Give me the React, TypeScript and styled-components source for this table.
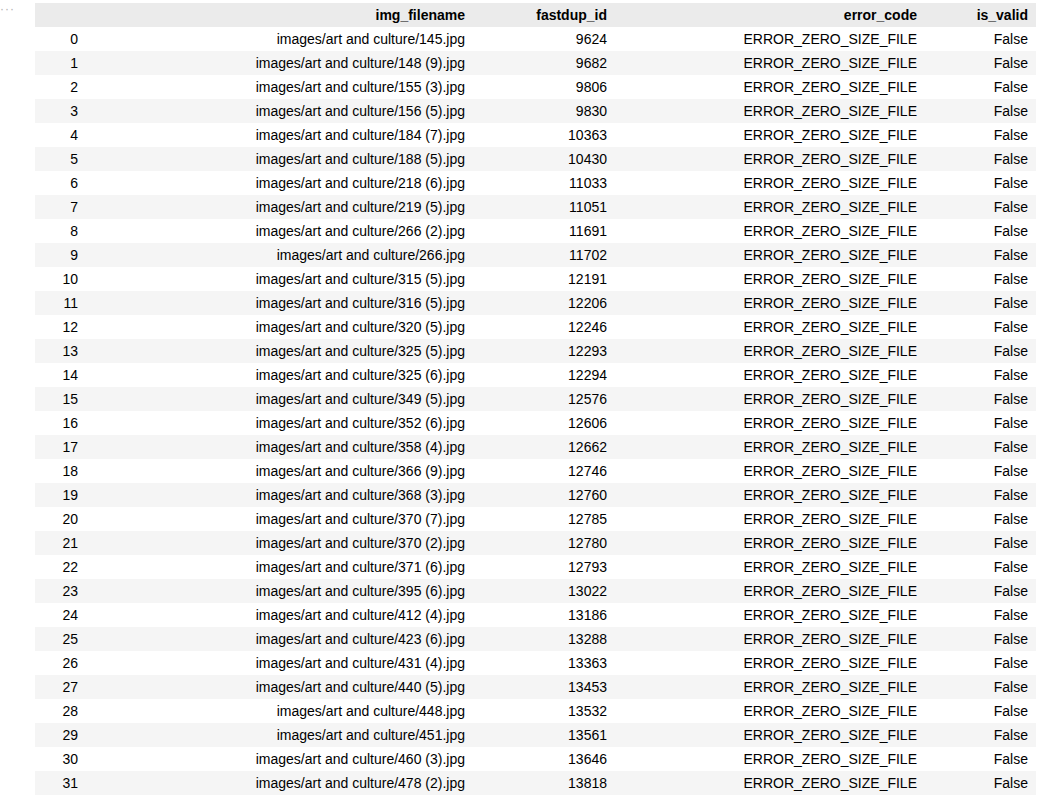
import React from "react";
import styled, { createGlobalStyle } from "styled-components";

const Global = createGlobalStyle`
  html, body { margin: 0; padding: 0; background: #fff; }
  body { font-family: "Liberation Sans", Arial, sans-serif; }
`;

const Page = styled.div`
  display: flex;
  align-items: flex-start;
  padding-top: 3px;
`;

const Prompt = styled.div`
  width: 35px;
  flex: none;
  color: #b0b0b0;
  font-size: 12px;
  line-height: 12px;
  letter-spacing: 1px;
`;

const Table = styled.table`
  border-collapse: collapse;
  border-spacing: 0;
  width: 1001px;
  table-layout: fixed;
  font-size: 14px;
  color: #000;
`;

const HeadRow = styled.tr`
  background: #ebebeb;
`;

const Row = styled.tr<{ $odd: boolean }>`
  background: ${(p) => (p.$odd ? "#f5f5f5" : "#ffffff")};
`;

const Th = styled.th<{ $w: number }>`
  box-sizing: border-box;
  width: ${(p) => p.$w}px;
  height: 24px;
  padding: 0 8px 0 0;
  text-align: right;
  font-weight: bold;
  line-height: 24px;
  white-space: nowrap;
`;

const Td = styled.td`
  box-sizing: border-box;
  height: 24px;
  padding: 0 8px 0 0;
  text-align: right;
  line-height: 24px;
  white-space: nowrap;
`;

const rows: [string, number][] = [
  ["145.jpg", 9624],
  ["148 (9).jpg", 9682],
  ["155 (3).jpg", 9806],
  ["156 (5).jpg", 9830],
  ["184 (7).jpg", 10363],
  ["188 (5).jpg", 10430],
  ["218 (6).jpg", 11033],
  ["219 (5).jpg", 11051],
  ["266 (2).jpg", 11691],
  ["266.jpg", 11702],
  ["315 (5).jpg", 12191],
  ["316 (5).jpg", 12206],
  ["320 (5).jpg", 12246],
  ["325 (5).jpg", 12293],
  ["325 (6).jpg", 12294],
  ["349 (5).jpg", 12576],
  ["352 (6).jpg", 12606],
  ["358 (4).jpg", 12662],
  ["366 (9).jpg", 12746],
  ["368 (3).jpg", 12760],
  ["370 (7).jpg", 12785],
  ["370 (2).jpg", 12780],
  ["371 (6).jpg", 12793],
  ["395 (6).jpg", 13022],
  ["412 (4).jpg", 13186],
  ["423 (6).jpg", 13288],
  ["431 (4).jpg", 13363],
  ["440 (5).jpg", 13453],
  ["448.jpg", 13532],
  ["451.jpg", 13561],
  ["460 (3).jpg", 13646],
  ["478 (2).jpg", 13818],
];

export default function App() {
  return (
    <>
      <Global />
      <Page>
        <Prompt>···</Prompt>
        <Table>
          <thead>
            <HeadRow>
              <Th $w={51}></Th>
              <Th $w={387}>img_filename</Th>
              <Th $w={142}>fastdup_id</Th>
              <Th $w={310}>error_code</Th>
              <Th $w={111}>is_valid</Th>
            </HeadRow>
          </thead>
          <tbody>
            {rows.map(([f, id], i) => (
              <Row key={i} $odd={i % 2 === 1}>
                <Td>{i}</Td>
                <Td>images/art and culture/{f}</Td>
                <Td>{id}</Td>
                <Td>ERROR_ZERO_SIZE_FILE</Td>
                <Td>False</Td>
              </Row>
            ))}
          </tbody>
        </Table>
      </Page>
    </>
  );
}
